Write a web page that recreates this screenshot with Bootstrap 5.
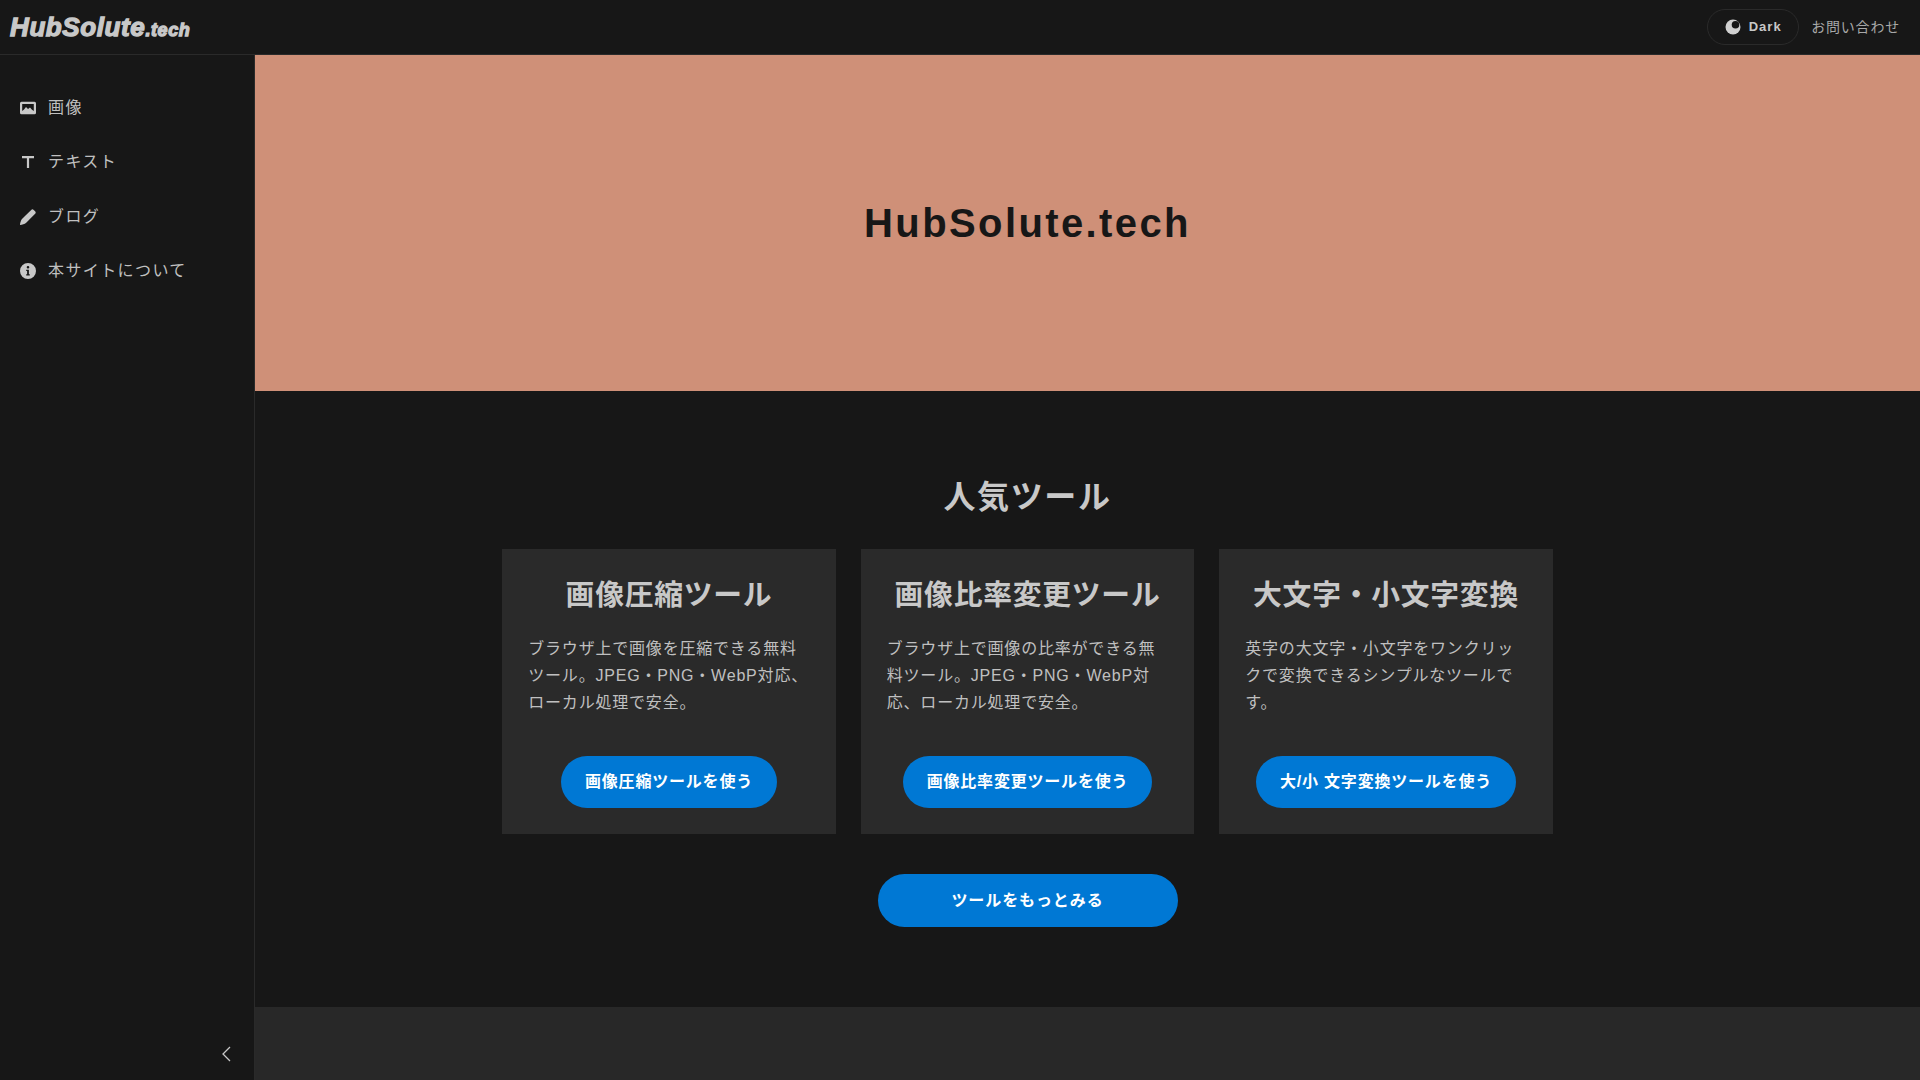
<!DOCTYPE html>
<html lang="ja">
<head>
  <meta charset="UTF-8">
  <title>HubSolute.tech</title>
  <link href="https://cdn.jsdelivr.net/npm/bootstrap@5.3.3/dist/css/bootstrap.min.css" rel="stylesheet">
  <style>
    html, body {
      height: 100%;
    }
    body {
      background-color: #171717;
      color: #c8c8c8;
      font-family: "Liberation Sans", "Noto Sans CJK JP", sans-serif;
      overflow: hidden;
    }
    .top-bar {
      height: 55px;
      border-bottom: 1px solid #2a2a2a;
      padding: 0 20px 0 10px;
    }
    .logo-text {
      font-family: "Liberation Sans", sans-serif;
      font-weight: 700;
      font-style: italic;
      font-size: 26px;
      color: #c8c8c8;
      -webkit-text-stroke: 1.3px #c8c8c8;
      letter-spacing: 0.6px;
      text-decoration: none;
    }
    .logo-text span {
      font-size: 18px;
    }
    .theme-pill {
      height: 36px;
      width: 92px;
      border: 1px solid #2a2a2a;
      border-radius: 18px;
      font-size: 13px;
      font-weight: 700;
      letter-spacing: 1px;
      color: #c8c8c8;
      background: transparent;
    }
    .contact-link {
      font-size: 14px;
      letter-spacing: 0.8px;
      color: #a8a8a8;
      text-decoration: none;
    }
    .header-right {
      gap: 12px;
    }
    .page-wrap {
      height: calc(100vh - 55px);
    }
    .side-bar {
      width: 255px;
      flex: none;
      border-right: 1px solid #2a2a2a;
      padding-top: 26px;
    }
    .side-item {
      height: 54.3px;
      padding-left: 20px;
      gap: 12px;
      font-size: 16px;
      letter-spacing: 1.4px;
      color: #c0c0c0;
      text-decoration: none;
    }
    .side-item svg {
      width: 16px;
      height: 16px;
      flex: none;
    }
    .side-toggle {
      bottom: 18px;
      left: 221px;
    }
    .hero-band {
      height: 336px;
      background-color: #cf9078;
      padding-right: 120px;
    }
    .hero-band h1 {
      font-size: 40px;
      font-weight: 700;
      letter-spacing: 2.4px;
      color: #171717;
      margin: 0;
    }
    .tools-section {
      height: 616px;
      padding: 82px 120px 0 0;
    }
    .tools-section h2 {
      font-size: 32px;
      font-weight: 700;
      letter-spacing: 1.6px;
      color: #c8c8c8;
      margin: 0 0 28px;
      line-height: 48px;
    }
    .tool-row {
      gap: 25px;
    }
    .tool-box {
      width: 333.5px;
      height: 285px;
      background-color: #2a2a2a;
      padding: 26px 26px 26px;
    }
    .tool-box h3 {
      font-size: 28.8px;
      font-weight: 700;
      letter-spacing: 0.75px;
      color: #c8c8c8;
      line-height: 40px;
      margin: 0 0 20px;
      white-space: nowrap;
    }
    .tool-box p {
      font-size: 16px;
      line-height: 27px;
      letter-spacing: 0.8px;
      color: #c0c0c0;
      margin: 0;
    }
    .tool-btn {
      background-color: #0078d4;
      color: #fff;
      font-size: 16px;
      font-weight: 700;
      letter-spacing: 0.8px;
      border: none;
      border-radius: 26px;
      height: 52px;
      padding: 0 23.5px;
    }
    .more-btn {
      background-color: #0078d4;
      color: #fff;
      font-size: 16px;
      font-weight: 700;
      letter-spacing: 0.9px;
      border: none;
      border-radius: 27px;
      width: 300px;
      height: 53px;
      margin-top: 40px;
    }
    .foot-band {
      height: 100px;
      background-color: #282828;
    }
  </style>
</head>
<body>

<header class="top-bar d-flex align-items-center justify-content-between">
  <a href="#" class="logo-text">HubSolute<span>.tech</span></a>
  <div class="header-right d-flex align-items-center">
    <button type="button" class="theme-pill d-flex align-items-center justify-content-center gap-2 p-0">
      <svg width="16" height="16" viewBox="0 0 16 16"><circle cx="8" cy="8" r="7.500" fill="#d0d0d0"/><circle cx="10.500" cy="5.800" r="3.800" fill="#171717"/></svg>
      Dark
    </button>
    <a href="#" class="contact-link">お問い合わせ</a>
  </div>
</header>

<div class="page-wrap d-flex position-relative">
  <nav class="side-bar d-flex flex-column">
    <a href="#" class="side-item d-flex align-items-center">
      <svg viewBox="0 0 16 16"><path fill="#c8c8c8" fill-rule="evenodd" d="M1.500 1.800h13A1.500 1.500 0 0 1 16 3.300v9.400a1.500 1.500 0 0 1-1.500 1.500h-13A1.500 1.500 0 0 1 0 12.700V3.300a1.500 1.500 0 0 1 1.500-1.500zM2.200 4v7l1.800-1.500L6 7l2 2 2-1.500 2 2.300 1.800 1.200V4z"/></svg>
      画像
    </a>
    <a href="#" class="side-item d-flex align-items-center">
      <svg viewBox="0 0 16 16"><path fill="#c8c8c8" d="M2 2h12v2.200H9.100V14H6.900V4.200H2z"/></svg>
      テキスト
    </a>
    <a href="#" class="side-item d-flex align-items-center">
      <svg viewBox="0 0 16 16"><path fill="#c8c8c8" d="M11.200.900a1.800 1.800 0 0 1 2.500 0l1.400 1.400a1.800 1.800 0 0 1 0 2.500L6.200 13.800C4.500 15.300 2.300 15.800 0 16c.2-2.300.7-4.500 2.200-6.200z"/></svg>
      ブログ
    </a>
    <a href="#" class="side-item d-flex align-items-center">
      <svg viewBox="0 0 16 16"><path fill="#c8c8c8" fill-rule="evenodd" d="M8 0a8 8 0 1 1 0 16A8 8 0 0 1 8 0zM8 3a1.300 1.300 0 1 0 0 2.600A1.300 1.300 0 0 0 8 3zM6.200 6.700v1.200h.9v3.400h-.9v1.200h3.600v-1.200h-.9V6.700z"/></svg>
      本サイトについて
    </a>
  </nav>
  <button type="button" class="side-toggle position-absolute border-0 bg-transparent p-0 d-flex">
    <svg width="10" height="16" viewBox="0 0 10 16"><path fill="none" stroke="#c8c8c8" stroke-width="1.300" d="M9 1 2 8l7 7"/></svg>
  </button>

  <main class="flex-grow-1">
    <section class="hero-band d-flex align-items-center justify-content-center">
      <h1>HubSolute.tech</h1>
    </section>
    <section class="tools-section text-center">
      <h2>人気ツール</h2>
      <div class="tool-row d-flex justify-content-center">
        <div class="tool-box d-flex flex-column align-items-center">
          <h3>画像圧縮ツール</h3>
          <p class="text-start">ブラウザ上で画像を圧縮できる無料ツール。JPEG・PNG・WebP対応、ローカル処理で安全。</p>
          <button type="button" class="tool-btn mt-auto">画像圧縮ツールを使う</button>
        </div>
        <div class="tool-box d-flex flex-column align-items-center">
          <h3>画像比率変更ツール</h3>
          <p class="text-start">ブラウザ上で画像の比率ができる無料ツール。JPEG・PNG・WebP対応、ローカル処理で安全。</p>
          <button type="button" class="tool-btn mt-auto">画像比率変更ツールを使う</button>
        </div>
        <div class="tool-box d-flex flex-column align-items-center">
          <h3>大文字・小文字変換</h3>
          <p class="text-start">英字の大文字・小文字をワンクリックで変換できるシンプルなツールです。</p>
          <button type="button" class="tool-btn mt-auto">大/小 文字変換ツールを使う</button>
        </div>
      </div>
      <button type="button" class="more-btn">ツールをもっとみる</button>
    </section>
    <div class="foot-band"></div>
  </main>
</div>

<script src="https://cdn.jsdelivr.net/npm/bootstrap@5.3.3/dist/js/bootstrap.bundle.min.js"></script>
</body>
</html>
